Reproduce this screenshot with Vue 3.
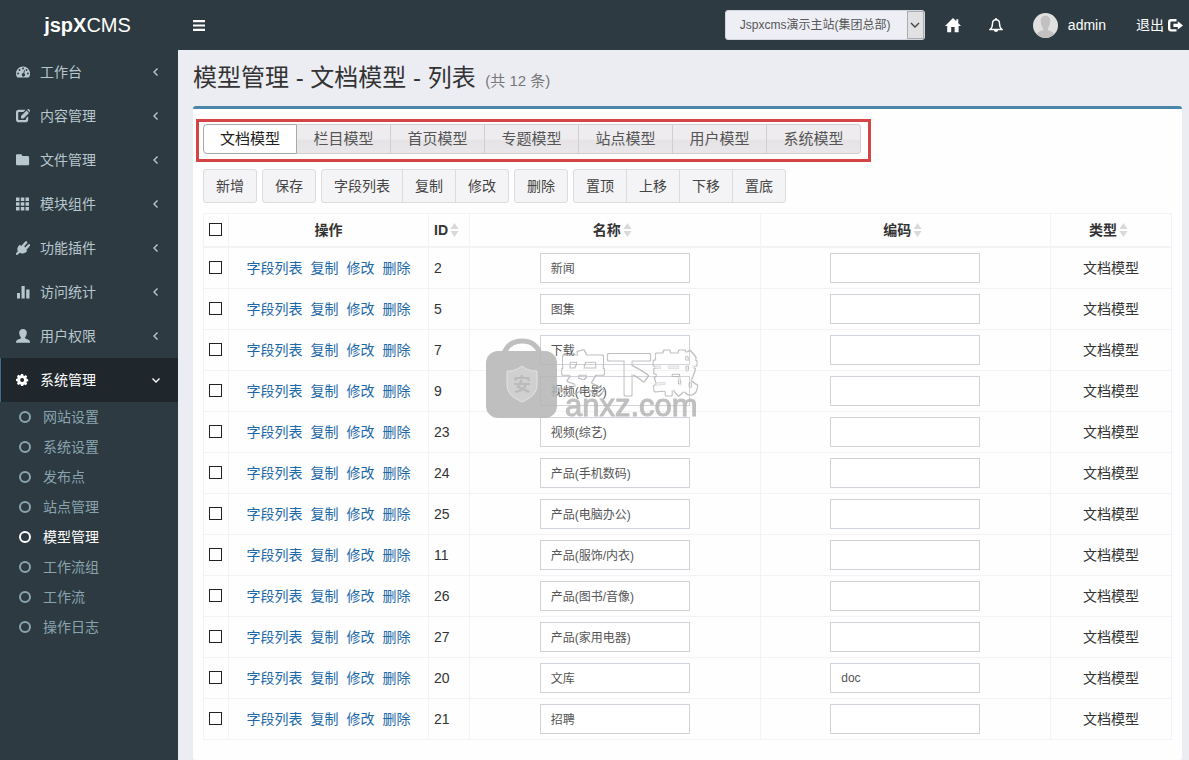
<script setup>
import { ref } from 'vue'

const menu = [
  { text: '工作台', icon: 'dashboard' },
  { text: '内容管理', icon: 'edit' },
  { text: '文件管理', icon: 'folder' },
  { text: '模块组件', icon: 'grid' },
  { text: '功能插件', icon: 'plug' },
  { text: '访问统计', icon: 'chart' },
  { text: '用户权限', icon: 'user' },
  { text: '系统管理', icon: 'gear', open: true },
]
const submenu = ['网站设置', '系统设置', '发布点', '站点管理', '模型管理', '工作流组', '工作流', '操作日志']
const activeSub = '模型管理'

const tabs = ['文档模型', '栏目模型', '首页模型', '专题模型', '站点模型', '用户模型', '系统模型']
const activeTab = ref('文档模型')

const toolbar = [['新增'], ['保存'], ['字段列表', '复制', '修改'], ['删除'], ['置顶', '上移', '下移', '置底']]
const rowActions = ['字段列表', '复制', '修改', '删除']

const rows = ref([
  { id: 2, name: '新闻', code: '' },
  { id: 5, name: '图集', code: '' },
  { id: 7, name: '下载', code: '' },
  { id: 9, name: '视频(电影)', code: '' },
  { id: 23, name: '视频(综艺)', code: '' },
  { id: 24, name: '产品(手机数码)', code: '' },
  { id: 25, name: '产品(电脑办公)', code: '' },
  { id: 11, name: '产品(服饰/内衣)', code: '' },
  { id: 26, name: '产品(图书/音像)', code: '' },
  { id: 27, name: '产品(家用电器)', code: '' },
  { id: 20, name: '文库', code: 'doc' },
  { id: 21, name: '招聘', code: '' },
])
</script>

<template>
  <div class="page">
    <header class="topbar">
      <a class="logo" href="#"><b>jspX</b>CMS</a>
      <button class="toggle" type="button" aria-label="菜单">
        <svg viewBox="0 0 12 11" width="12" height="11"><path d="M0 0h12v2.2H0zM0 4.4h12v2.2H0zM0 8.8h12V11H0z" /></svg>
      </button>
      <div class="site">
        <select aria-label="站点">
          <option>Jspxcms演示主站(集团总部)</option>
        </select>
        <span class="site-arrow">
          <svg viewBox="0 0 10 10" width="10" height="10"><path class="line" d="M1 3l4 4 4-4" /></svg>
        </span>
      </div>
      <a class="home" href="#" aria-label="首页">
        <svg viewBox="0 0 16 15" width="16" height="15"><path d="M8 0L0 8h2.2v6.2h4V9h3.4v5.200h4V8H16l-2.700-2.700V1.200h-2v2.100z" /></svg>
      </a>
      <a class="bell" href="#" aria-label="通知">
        <svg viewBox="0 0 14 15" width="14" height="15">
          <path class="line" d="M7 1.700c-2.300 0-3.500 1.700-3.500 3.800 0 3.200-.8 4.700-2.400 6h11.800c-1.600-1.300-2.400-2.800-2.400-6 0-2.100-1.200-3.800-3.500-3.800z" />
          <path d="M6.200 0h1.600v2H6.200zM4.900 12h4.200a2.100 2.100 0 0 1-4.200 0z" />
        </svg>
      </a>
      <a class="account" href="#">
        <svg class="avatar" viewBox="0 0 25 25" width="25" height="25">
          <circle cx="12.500" cy="12.500" r="12.500" fill="#e0e0e0" />
          <path fill="#c2c0c0" d="M12.500 2.500c-3.300 0-5 2.500-4.700 5.800.2 3.300 1.200 5.700 2.300 6.700v2c-2 1.200-5 1.500-6.400 4.300a12.500 12.500 0 0 0 17.600 0c-1.400-2.800-4.400-3.100-6.400-4.300v-2c1.100-1 2.100-3.400 2.300-6.700.3-3.300-1.400-5.800-4.700-5.800z" />
        </svg>
        <span>admin</span>
      </a>
      <a class="logout" href="#">
        <span>退出</span>
        <svg viewBox="0 0 15 13" width="15" height="13">
          <path d="M8.500 0H3a3 3 0 0 0-3 3v6.600a3 3 0 0 0 3 3h5.500v-2.400H3.400a1 1 0 0 1-1-1V3.400a1 1 0 0 1 1-1h5.100z" />
          <path d="M9.800 2.200L15 6.400l-5.200 4.200V8.100H5.400V4.700h4.400z" />
        </svg>
      </a>
    </header>

    <div class="body">
      <nav class="sidebar">
        <a v-for="m in menu" :key="m.text" href="#" class="item" :class="{ open: m.open }">
          <svg class="item-icon" viewBox="0 0 14 14" width="14" height="14">
            <path v-if="m.icon === 'dashboard'" fill-rule="evenodd" d="M7 1.500a7 7 0 0 0-7 7c0 1.400.4 2.700 1.100 3.800.2.200.4.300.6.300h10.600c.2 0 .4-.1.600-.3A7 7 0 0 0 7 1.500zM7 2.600a.95.95 0 1 1 0 1.900.95.95 0 0 1 0-1.900zM3.500 4a.95.95 0 1 1 0 1.900.95.95 0 0 1 0-1.900zM2.100 7.500a.95.95 0 1 1 0 1.900.95.95 0 0 1 0-1.900zM11.900 7.500a.95.95 0 1 1 0 1.900.95.95 0 0 1 0-1.900zM10.500 4a.95.95 0 1 1 0 1.900.95.95 0 0 1 0-1.900zM8.100 5.300l.9.200-.8 3a1.600 1.600 0 1 1-.9-.2z" />
            <template v-else-if="m.icon === 'edit'">
              <path d="M9.500.8H2.800A2.800 2.800 0 0 0 0 3.600v6.800a2.800 2.800 0 0 0 2.800 2.800h6.600a2.800 2.800 0 0 0 2.800-2.800V7.200l-2.200 2v1a.8.800 0 0 1-.8.800H3a.8.800 0 0 1-.8-.8V3.800A.8.800 0 0 1 3 3h4.400z" />
              <path d="M5 9.500V7l5.500-5.500L13 4 7.500 9.500zM11.200.8l.6-.6a.8.800 0 0 1 1.100 0l1 1a.8.800 0 0 1 0 1.100l-.5.700z" />
            </template>
            <path v-else-if="m.icon === 'folder'" d="M0 2.600C0 1.700.6 1.200 1.300 1.200h3.500c.8 0 1.400.6 1.400 1.400v.3h5.500c.8 0 1.400.6 1.400 1.400v6.600c0 .8-.6 1.400-1.400 1.400H1.300C.6 12.300 0 11.700 0 10.900z" />
            <path v-else-if="m.icon === 'grid'" d="M0 .5h3.500V4H0zM4.800.5h3.500V4H4.800zM9.500.5H13V4H9.500zM0 5.200h3.500v3.500H0zM4.800 5.200h3.500v3.500H4.800zM9.500 5.200H13v3.500H9.500zM0 9.900h3.500v3.500H0zM4.800 9.900h3.500v3.500H4.800zM9.500 9.900H13v3.500H9.500z" />
            <path v-else-if="m.icon === 'plug'" d="M0 13.800v-1.500l1.800-1.800C1 8.500 1.300 6.300 2.800 4.800l1.100-1.100 1.300 1.300L9.300.6a1.150 1.150 0 0 1 1.700 1.600L8.200 5.200l1.100 1.200 2.800-3a1.150 1.150 0 0 1 1.700 1.600L10.300 9l.9.900-1.100 1c-1.700 1.600-4.300 1.900-6.400.9l-2 2z" />
            <path v-else-if="m.icon === 'chart'" d="M1 8h3v5.500H1zM5.500 1h3.200v12.500H5.500zM10.200 4.500h3.300v9h-3.300z" />
            <path v-else-if="m.icon === 'user'" d="M7 0C4.500 0 3 1.700 3.200 4c.1 1.800.8 3.300 1.700 4.200v1.100C4.100 10.200 1.600 10.500.6 11.500.1 12 0 12.800 0 13.700h14c0-.9-.1-1.700-.6-2.200-1-1-3.500-1.300-4.300-2.200V8.200c.9-.9 1.600-2.400 1.700-4.200C11 1.700 9.500 0 7 0z" />
            <path v-else fill-rule="evenodd" d="M5 1h2.100l.3 1.500 1.100.4 1.200-.8 1.500 1.500-.8 1.200.4 1.100 1.400.3v2l-1.400.3-.4 1.100.8 1.200-1.500 1.500-1.200-.8-1.100.4L7.100 13H5l-.3-1.400-1.100-.4-1.200.8-1.500-1.500.8-1.200-.4-1.100L0 7.900v-2l1.300-.3.400-1.100-.8-1.200 1.500-1.500 1.200.8 1.100-.4zM6.100 5a2 2 0 1 0 0 4 2 2 0 0 0 0-4z" />
          </svg>
          <span class="item-text">{{ m.text }}</span>
          <svg class="caret" viewBox="0 0 10 10" width="10" height="10">
            <path class="line" :d="m.open ? 'M1.500 3.500l3.500 3.500 3.500-3.500' : 'M6.500 1.500L3 5l3.500 3.500'" />
          </svg>
        </a>
        <div class="sub">
          <a v-for="s in submenu" :key="s" href="#" class="sub-item" :class="{ active: s === activeSub }">
            <i class="ring"></i><span>{{ s }}</span>
          </a>
        </div>
      </nav>

      <main class="content">
        <h1>模型管理 - 文档模型 - 列表 <small>(共 12 条)</small></h1>
        <section class="box">
          <div class="tabs">
            <button
              v-for="t in tabs"
              :key="t"
              type="button"
              :class="{ active: t === activeTab }"
              @click="activeTab = t"
            >{{ t }}</button>
          </div>

          <div class="toolbar">
            <div v-for="(g, i) in toolbar" :key="i" class="group">
              <button v-for="b in g" :key="b" type="button">{{ b }}</button>
            </div>
          </div>

          <div class="table-wrap">
            <table>
              <colgroup>
                <col class="c-check" /><col class="c-ops" /><col class="c-id" /><col /><col /><col class="c-type" />
              </colgroup>
              <thead>
                <tr>
                  <th><input type="checkbox" aria-label="全选" /></th>
                  <th>操作</th>
                  <th v-for="h in ['ID', '名称', '编码', '类型']" :key="h">
                    <span class="sortable">{{ h }}<svg viewBox="0 0 9 14" width="9" height="14"><path d="M4.500 0L8.500 6h-8zM4.500 14L.5 8h8z" /></svg></span>
                  </th>
                </tr>
              </thead>
              <tbody>
                <tr v-for="r in rows" :key="r.id">
                  <td><input type="checkbox" :aria-label="r.name" /></td>
                  <td>
                    <div class="ops"><a v-for="a in rowActions" :key="a" href="#">{{ a }}</a></div>
                  </td>
                  <td class="id">{{ r.id }}</td>
                  <td><input v-model="r.name" type="text" aria-label="名称" /></td>
                  <td><input v-model="r.code" type="text" aria-label="编码" /></td>
                  <td>文档模型</td>
                </tr>
              </tbody>
            </table>
            <svg class="watermark" viewBox="0 0 216 92" width="216" height="92">
              <filter id="outline" x="-5%" y="-10%" width="110%" height="120%">
                <feMorphology in="SourceAlpha" operator="erode" radius="1" result="inner" />
                <feComposite in="SourceGraphic" in2="inner" operator="out" />
              </filter>
              <path class="handle" d="M17 18C20 8 27 3 36 3s16 5 19 15" />
              <rect x="0" y="13" width="71" height="67" rx="12" fill="#b5b5b5" />
              <path class="shield" d="M36 28c5 4 10 5 15 5v14c0 8-6 13-15 17-9-4-15-9-15-17V33c5 0 10-1 15-5z" />
              <text class="seal" x="27" y="53">安</text>
              <text class="mark" x="74" y="52" filter="url(#outline)">安下载</text>
              <text class="domain" x="79" y="78">anxz.com</text>
            </svg>
          </div>
        </section>
      </main>
    </div>
  </div>
</template>

<style>
html,
body {
  margin: 0;
  background: #ecedf3;
}
</style>

<style scoped>
.page {
  min-height: 100vh;
  display: flex;
  flex-direction: column;
  font: 14px/20px "Liberation Sans", "Noto Sans CJK SC", sans-serif;
  color: #333;
}
.page *,
.page *::after {
  box-sizing: border-box;
}
a {
  color: inherit;
  text-decoration: none;
}
button,
input,
select {
  font-family: inherit;
  margin: 0;
}
svg {
  display: block;
  flex: none;
  fill: currentColor;
}
.line {
  fill: none;
  stroke: currentColor;
  stroke-width: 1.4;
}

.topbar {
  display: flex;
  align-items: center;
  height: 50px;
  padding-right: 6px;
  background: #2d3a41;
  color: #fff;
}
.logo {
  width: 175px;
  text-align: center;
  font-size: 20px;
  line-height: 50px;
}
.toggle {
  margin: 0 auto 0 18px;
  padding: 0;
  border: 0;
  background: none;
  color: #fff;
}
.site {
  position: relative;
  width: 200px;
  height: 30px;
}
.site select {
  appearance: none;
  width: 100%;
  height: 30px;
  padding: 0 20px 0 14px;
  border: 1px solid #d2d6de;
  border-radius: 3px;
  background: #eeeff5;
  color: #555;
  font-size: 12px;
}
.site-arrow {
  position: absolute;
  top: 1px;
  right: 1px;
  bottom: 1px;
  width: 17px;
  display: flex;
  align-items: center;
  justify-content: center;
  border: 1px solid #a9adb1;
  background: #e1e1e3;
  color: #444;
  pointer-events: none;
}
.home {
  margin-left: 20px;
}
.bell {
  margin-left: 28px;
}
.account {
  display: flex;
  align-items: center;
  gap: 10px;
  margin-left: 30px;
}
.logout {
  display: flex;
  align-items: center;
  gap: 4px;
  margin-left: 30px;
}

.body {
  flex: 1;
  display: flex;
}
.sidebar {
  flex: none;
  width: 178px;
  background: #2d3a41;
  color: #b8c7ce;
}
.item {
  display: flex;
  align-items: center;
  height: 44px;
  padding: 0 17px 0 15px;
  border-left: 1px solid transparent;
}
.item.open {
  border-left-color: #3c6d8c;
  background: #1f262c;
  color: #fff;
}
.item-text {
  flex: 1;
  margin-left: 10px;
}
.sub {
  color: #8aa4af;
}
.sub-item {
  display: flex;
  align-items: center;
  gap: 12px;
  height: 30px;
  padding-left: 19px;
}
.sub-item.active {
  color: #fff;
}
.ring {
  width: 12px;
  height: 12px;
  border: 2px solid currentColor;
  border-radius: 50%;
}

.content {
  flex: 1;
  min-width: 0;
  display: flex;
  flex-direction: column;
  padding: 0 7px 0 15px;
}
h1 {
  margin: 0;
  padding: 13px 0 10px;
  font-size: 24px;
  line-height: 30px;
  font-weight: 400;
}
h1 small {
  margin-left: 3px;
  font-size: 15px;
  color: #777;
}
.box {
  flex: 1;
  padding: 15px 10px 20px;
  border-top: 3px solid #4c86a8;
  border-radius: 3px;
  background: #fefefe;
}
.tabs {
  position: relative;
  display: flex;
  width: max-content;
}
.tabs::after {
  content: "";
  position: absolute;
  inset: -5px -10px -8px -7px;
  border: 3px solid #d64545;
  pointer-events: none;
}
.tabs button {
  width: 94px;
  height: 30px;
  padding: 0;
  border: 1px solid #d0ced0;
  border-left-width: 0;
  background: linear-gradient(#eeecee 50%, #e5e3e5 55%, #e9e7e9);
  color: #555;
  font-size: 15px;
  line-height: 20px;
}
.tabs button:first-child {
  border-left-width: 1px;
  border-radius: 4px 0 0 4px;
}
.tabs button:last-child {
  border-radius: 0 4px 4px 0;
}
.tabs button.active {
  border-color: #aaa;
  background: #fff;
  color: #212121;
}
.toolbar {
  display: flex;
  gap: 5px;
  margin-top: 15px;
}
.group {
  display: flex;
}
.group button {
  height: 34px;
  padding: 0 12px;
  border: 1px solid #dddbdd;
  background: #f4f3f5;
  color: #444;
  font-size: 14px;
  line-height: 20px;
}
.group button + button {
  margin-left: -1px;
}
.group button:first-child {
  border-top-left-radius: 3px;
  border-bottom-left-radius: 3px;
}
.group button:last-child {
  border-top-right-radius: 3px;
  border-bottom-right-radius: 3px;
}

.table-wrap {
  position: relative;
  margin-top: 10px;
}
table {
  width: 100%;
  table-layout: fixed;
  border-collapse: collapse;
}
.c-check {
  width: 25px;
}
.c-ops {
  width: 200px;
}
.c-id {
  width: 41px;
}
.c-type {
  width: 121px;
}
th,
td {
  border: 1px solid #f4f2f4;
  padding: 5px;
  text-align: center;
  vertical-align: middle;
}
th {
  height: 33px;
  padding: 0 5px;
  border-bottom-width: 2px;
}
.id {
  text-align: left;
}
.sortable {
  display: inline-flex;
  align-items: center;
  gap: 2px;
  padding-right: 5px;
}
.sortable svg {
  fill: #d9d9d9;
}
.ops {
  display: flex;
  justify-content: center;
  gap: 8px;
  color: #1d68a7;
}
input[type='checkbox'] {
  appearance: none;
  display: block;
  width: 13px;
  height: 13px;
  border: 1px solid #222;
  background: #fff;
}
input[type='text'] {
  display: block;
  width: 150px;
  height: 30px;
  margin: 0 auto;
  padding: 0 10px;
  border: 1px solid #d0d4da;
  background: #fff;
  color: #555;
  font-size: 12px;
}
.watermark {
  position: absolute;
  top: 125px;
  left: 283px;
  opacity: 0.85;
  pointer-events: none;
}
.handle {
  fill: none;
  stroke: #b5b5b5;
  stroke-width: 5;
}
.shield {
  fill: #c9c9c9;
  stroke: #dedede;
  stroke-width: 1;
}
.seal {
  font-size: 18px;
  font-weight: 700;
  fill: #b0b0b0;
}
.mark {
  font-size: 46px;
  font-weight: 700;
  fill: #b5b5b5;
  stroke: #b5b5b5;
  stroke-width: 3;
  stroke-linejoin: round;
}
.domain {
  font-size: 31px;
  fill: #b5b5b5;
  stroke: #b5b5b5;
  stroke-width: 1;
}
</style>
